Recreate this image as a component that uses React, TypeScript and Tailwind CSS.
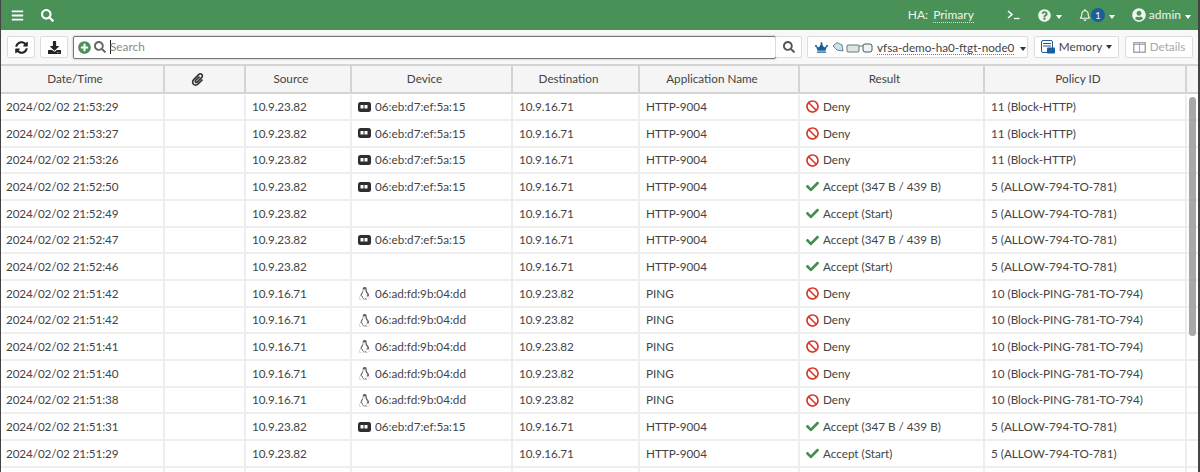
import React from "react";
import { FaLinux, FaCrown, FaUserCircle, FaQuestionCircle, FaRegBell, FaPlusCircle, FaSearch, FaSyncAlt, FaDownload, FaBars, FaCheck, FaBan, FaPaperclip } from "react-icons/fa";

const cols = ["w-[164px]", "w-[81px]", "w-[106px]", "w-[161px]", "w-[127px]", "w-[160px]", "w-[185px]", "w-[202px]"];

type Row = { t: string; s: string; dev: string; d: string; a: string; r: string; p: string };
const H = "06:eb:d7:ef:5a:15";
const L = "06:ad:fd:9b:04:dd";
const A1 = "Accept (347 B / 439 B)";
const A2 = "Accept (Start)";
const P5 = "5 (ALLOW-794-TO-781)";
const P11 = "11 (Block-HTTP)";
const P10 = "10 (Block-PING-781-TO-794)";
const S = "10.9.23.82";
const D = "10.9.16.71";
const rows: Row[] = [
  { t: "2024/02/02 21:53:29", s: S, dev: H, d: D, a: "HTTP-9004", r: "Deny", p: P11 },
  { t: "2024/02/02 21:53:27", s: S, dev: H, d: D, a: "HTTP-9004", r: "Deny", p: P11 },
  { t: "2024/02/02 21:53:26", s: S, dev: H, d: D, a: "HTTP-9004", r: "Deny", p: P11 },
  { t: "2024/02/02 21:52:50", s: S, dev: H, d: D, a: "HTTP-9004", r: A1, p: P5 },
  { t: "2024/02/02 21:52:49", s: S, dev: "", d: D, a: "HTTP-9004", r: A2, p: P5 },
  { t: "2024/02/02 21:52:47", s: S, dev: H, d: D, a: "HTTP-9004", r: A1, p: P5 },
  { t: "2024/02/02 21:52:46", s: S, dev: "", d: D, a: "HTTP-9004", r: A2, p: P5 },
  { t: "2024/02/02 21:51:42", s: D, dev: L, d: S, a: "PING", r: "Deny", p: P10 },
  { t: "2024/02/02 21:51:42", s: D, dev: L, d: S, a: "PING", r: "Deny", p: P10 },
  { t: "2024/02/02 21:51:41", s: D, dev: L, d: S, a: "PING", r: "Deny", p: P10 },
  { t: "2024/02/02 21:51:40", s: D, dev: L, d: S, a: "PING", r: "Deny", p: P10 },
  { t: "2024/02/02 21:51:38", s: D, dev: L, d: S, a: "PING", r: "Deny", p: P10 },
  { t: "2024/02/02 21:51:31", s: S, dev: H, d: D, a: "HTTP-9004", r: A1, p: P5 },
  { t: "2024/02/02 21:51:29", s: S, dev: "", d: D, a: "HTTP-9004", r: A2, p: P5 },
  { t: "", s: "", dev: "", d: "", a: "", r: "", p: "" },
];

function SwitchIcon() {
  return (
    <svg width="13" height="10" viewBox="0 0 13 10" className="shrink-0">
      <rect x="0" y="0" width="13" height="10" rx="2.5" fill="#2e2e2e" />
      <rect x="2.5" y="3" width="3" height="3.5" fill="#fff" />
      <rect x="6.5" y="3" width="3" height="3.5" fill="#fff" />
    </svg>
  );
}

function Cell({ i, children, cls = "pl-[6px]" }: { i: number; children?: React.ReactNode; cls?: string }) {
  return <div className={`${cols[i]} shrink-0 h-full flex items-center gap-[4px] border-r-2 border-[#eeeeee] whitespace-nowrap ${cls}`}>{children}</div>;
}

function Head({ i, children }: { i: number; children?: React.ReactNode }) {
  return <div className={`${cols[i]} shrink-0 h-full flex items-center justify-center pr-[14px] border-r-2 border-[#d4d4d4]`}>{children}</div>;
}

function Btn({ children, cls = "" }: { children: React.ReactNode; cls?: string }) {
  return <div className={`h-[22px] flex items-center justify-center bg-white border border-[#dcdcdc] rounded-[2px] ${cls}`}>{children}</div>;
}

function Caret({ cls = "border-t-white" }: { cls?: string }) {
  return <span className={`inline-block w-0 h-0 border-x-[3px] border-x-transparent border-t-[4px] ${cls}`} />;
}

export default function App() {
  return (
    <div className="w-[1200px] h-[472px] overflow-hidden bg-white text-[#444] text-[11.7px] border-l border-r-2 border-[#444] flex flex-col" style={{ fontFamily: "Lato, 'Liberation Sans', sans-serif" }}>
      <div className="h-[30px] shrink-0 bg-[#4a9158] text-white flex items-center">
        <FaBars className="ml-[10px] text-[13px]" />
        <FaSearch className="ml-[17px] text-[13px]" />
        <div className="ml-auto flex items-center text-[12px] text-[#eef5ef]">
          <span>HA:</span>
          <span className="ml-[5px] border-b border-dotted border-[#cfe3d3] leading-[14px]">Primary</span>
          <svg width="13" height="10" viewBox="0 0 13 10" className="ml-[33px]">
            <path d="M1 1 L5 4.5 L1 8" fill="none" stroke="#fff" strokeWidth="1.5" />
            <path d="M7 8.5 H12.5" stroke="#fff" strokeWidth="1.3" />
          </svg>
          <FaQuestionCircle className="ml-[18px] text-[13px]" />
          <span className="ml-[5px]"><Caret /></span>
          <FaRegBell className="ml-[17px] text-[12px]" />
          <span className="w-[14px] h-[14px] rounded-full bg-[#1b5e9e] text-[10px] flex items-center justify-center">1</span>
          <span className="ml-[4px]"><Caret /></span>
          <FaUserCircle className="ml-[17px] text-[14px]" />
          <span className="ml-[3px]">admin</span>
          <span className="ml-[4px] mr-[7px]"><Caret /></span>
        </div>
      </div>
      <div className="h-[36px] shrink-0 bg-[#f8f8f8] flex items-center pl-[6px] border-b-2 border-[#d4d4d4]">
        <Btn cls="w-[28px]"><FaSyncAlt className="text-[13px] text-[#222]" /></Btn>
        <Btn cls="w-[28px] ml-[5px]"><FaDownload className="text-[13px] text-[#222]" /></Btn>
        <div className="ml-[5px] w-[703px] h-[23px] bg-white border border-[#777] rounded-[2px] shadow-[0_0_2px_#999] flex items-center pl-[4px]">
          <FaPlusCircle className="text-[13px] text-[#4a9158]" />
          <FaSearch className="ml-[3px] text-[12px] text-[#666]" />
          <span className="ml-[4px] w-px h-[14px] bg-[#222]" />
          <span className="text-[#8a8a8a] text-[11.8px] -ml-px">Search</span>
        </div>
        <Btn cls="w-[27px] -ml-px"><FaSearch className="text-[12px] text-[#555]" /></Btn>
        <Btn cls="ml-[5px] w-[221px] justify-start pl-[7px] gap-[2px] whitespace-nowrap">
          <FaCrown className="text-[13px] text-[#1b5e9e] shrink-0" />
          <svg width="45" height="14" viewBox="0 0 45 14" className="shrink-0">
            <path d="M3 6 L7 2.5 L12 5 L13 11 L7 10 Z" fill="#cfe0e8" stroke="#5f8496" />
            <rect x="17" y="5" width="12" height="7" rx="1" fill="#dbe6e6" stroke="#66787a" />
            <rect x="33" y="4" width="9" height="8" rx="2" fill="#f2f4f4" stroke="#4a5557" />
            <path d="M29 6 h4" stroke="#66787a" />
          </svg>
          <span className="border-b border-dotted border-[#777] leading-[14px]">vfsa-demo-ha0-ftgt-node0</span>
          <span className="ml-[4px]"><Caret cls="border-t-[#333]" /></span>
        </Btn>
        <Btn cls="ml-[6px] w-[85px] gap-[4px]">
          <svg width="14" height="14" viewBox="0 0 14 14" className="shrink-0">
            <rect x="0.5" y="0.5" width="11" height="12" rx="1.5" fill="#fff" stroke="#1b5e9e" />
            <path d="M2 3.5 h8 M2 6 h8" stroke="#1b5e9e" />
            <rect x="6" y="7.5" width="8" height="6" rx="1" fill="#1b5e9e" />
          </svg>
          <span>Memory</span>
          <Caret cls="border-t-[#333]" />
        </Btn>
        <Btn cls="ml-[6px] w-[68px] gap-[4px] text-[#a8a8a8]">
          <svg width="13" height="11" viewBox="0 0 13 11" className="shrink-0">
            <rect x="0.75" y="0.75" width="11.5" height="9.5" fill="none" stroke="#a8a8a8" strokeWidth="1.5" />
            <path d="M0.5 2.5 h12 M6.5 0.5 v10" stroke="#a8a8a8" />
          </svg>
          <span>Details</span>
        </Btn>
      </div>
      <div className="h-[28px] shrink-0 bg-[#f5f5f5] flex items-center border-b-2 border-[#d4d4d4]">
        <Head i={0}>Date/Time</Head>
        <Head i={1}><FaPaperclip className="text-[13px] text-[#333]" /></Head>
        <Head i={2}>Source</Head>
        <Head i={3}>Device</Head>
        <Head i={4}>Destination</Head>
        <Head i={5}>Application Name</Head>
        <Head i={6}>Result</Head>
        <Head i={7}>Policy ID</Head>
      </div>
      <div className="flex-1 min-h-0 relative overflow-hidden pt-[0.5px]">
        {rows.map((r, n) => (
          <div key={n} className="h-[26.67px] flex items-center border-b-2 border-[#eeeeee]">
            <Cell i={0} cls="pl-[5px] tracking-[-0.1px]">{r.t}</Cell>
            <Cell i={1} />
            <Cell i={2} cls="pl-[6px] tracking-[-0.1px]">{r.s}</Cell>
            <Cell i={3}>
              {r.dev === H && <SwitchIcon />}
              {r.dev === L && <FaLinux className="text-[13px] text-[#555] shrink-0" />}
              {r.dev}
            </Cell>
            <Cell i={4} cls="pl-[6px] tracking-[-0.1px]">{r.d}</Cell>
            <Cell i={5}>{r.a}</Cell>
            <Cell i={6}>
              {r.r === "Deny" && <FaBan className="text-[13px] text-[#d9372c] shrink-0" />}
              {r.r.startsWith("Accept") && <FaCheck className="text-[13px] text-[#3f8f50] shrink-0" />}
              {r.r}
            </Cell>
            <Cell i={7}>{r.p}</Cell>
          </div>
        ))}
        <div className="absolute left-[1188px] top-[3px] w-[7px] h-[239px] rounded-full bg-[#a8a8a8]" />
      </div>
    </div>
  );
}
